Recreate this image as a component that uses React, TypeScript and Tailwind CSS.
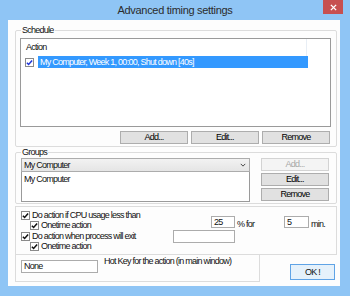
import React from "react";

const F = "font-['Liberation_Sans',Arial,sans-serif]";

function Check({ blue }: { blue?: boolean }) {
  return (
    <span className="flex h-[9px] w-[9px] shrink-0 items-center justify-center border border-[#8a8a8a] bg-white">
      <svg viewBox="0 0 8 8" className="h-[7px] w-[7px]">
        <path d="M1 4.2 L3 6.3 L7 1.6" fill="none" stroke={blue ? "#2036d8" : "#111"} strokeWidth="1.7" />
      </svg>
    </span>
  );
}

function Btn({ children, disabled }: { children: React.ReactNode; disabled?: boolean }) {
  return (
    <button
      className={`flex h-[13px] w-[68px] items-center justify-center border text-[9px] leading-none ${
        disabled ? "border-[#d3d3d3] bg-[#f4f4f4] text-[#a8a8a8]" : "border-[#adadad] bg-[#e1e1e1] text-black"
      }`}
    >
      {children}
    </button>
  );
}

function CheckRow({ label, indent }: { label: string; indent?: boolean }) {
  return (
    <div className={`flex h-[10px] items-center ${indent ? "pl-[9px]" : ""}`}>
      <Check />
      <span className="ml-[2px] whitespace-nowrap text-[9px] leading-none">{label}</span>
    </div>
  );
}

export default function App() {
  return (
    <div className={`flex h-[296px] w-[350px] flex-col bg-[#8fc5f5] tracking-[-0.75px] text-[#111] ${F}`}>
      {/* title bar */}
      <div className="flex h-[20px] items-start pl-[27px]">
        <div className="flex-1 pt-[5px] text-center text-[11px] leading-none tracking-[-0.3px] text-[#2b2b2b]">
          Advanced timing settings
        </div>
        <div className="mr-[7px] flex h-[14px] w-[20px] items-center justify-center bg-[#c75050]">
          <svg viewBox="0 0 8 8" className="h-[7px] w-[7px]">
            <path d="M1 1 L7 7 M7 1 L1 7" stroke="#fff" strokeWidth="1.6" />
          </svg>
        </div>
      </div>

      {/* client */}
      <div className="ml-[8px] h-[266px] w-[332px] bg-[#fdfdfd]">
        {/* Schedule */}
        <fieldset className="ml-[7px] mt-[5px] w-[322px] rounded-[2px] border border-[#dcdcdc] pb-[2px] pl-[4px] pr-[5px]">
          <legend className="ml-[1px] px-[1px] text-[9px] leading-[11px]">Schedule</legend>
          <div className="mt-[2px] h-[89px] border border-[#9a9a9a] bg-white">
            <div className="flex h-[17px]">
              <div className="flex w-[286px] items-center border-r border-[#e8eef5] pl-[5px] text-[9px] leading-none">
                Action
              </div>
            </div>
            <div className="flex h-[12px] items-center">
              <div className="ml-[4px]">
                <Check blue />
              </div>
              <div className="ml-[4px] flex h-[12px] w-[270px] items-center whitespace-nowrap bg-[#3399ff] pl-[2px] text-[9px] leading-none text-white">
                My Computer, Week 1, 00:00, Shut down [40s]
              </div>
            </div>
          </div>
          <div className="mr-[1px] mt-[4px] flex justify-end gap-[3px]">
            <Btn>Add...</Btn>
            <Btn>Edit...</Btn>
            <Btn>Remove</Btn>
          </div>
        </fieldset>

        {/* Groups */}
        <fieldset className="ml-[7px] w-[322px] rounded-[2px] border border-[#dcdcdc] pb-[1px] pl-[5px]">
          <legend className="px-[1px] text-[9px] leading-[11px]">Groups</legend>
          <div className="flex">
            <div className="w-[229px]">
              <div className="flex h-[14px] items-center justify-between border border-[#acacac] bg-gradient-to-b from-[#f2f2f2] to-[#e5e5e5] pl-[2px] pr-[3px] text-[9px] leading-none">
                <span>My Computer</span>
                <svg viewBox="0 0 8 5" className="h-[4px] w-[6px]">
                  <path d="M1 1 L4 4 L7 1" fill="none" stroke="#444" strokeWidth="1.3" />
                </svg>
              </div>
              <div className="h-[30px] border border-t-0 border-[#9a9a9a] bg-white pl-[2px] pt-[2px] text-[9px] leading-[11px]">
                My Computer
              </div>
            </div>
            <div className="ml-[11px] flex flex-col gap-[2px]">
              <Btn disabled>Add...</Btn>
              <Btn>Edit...</Btn>
              <Btn>Remove</Btn>
            </div>
          </div>
        </fieldset>

        {/* options */}
        <div className="ml-[7px] mt-[2px] w-[322px] border border-[#dcdcdc] pb-[3px] pl-[5px] pt-[3px]">
          <div className="flex items-start">
            <div className="w-[190px]">
              <CheckRow label="Do action if CPU usage less than" />
              <CheckRow label="Onetime action" indent />
            </div>
            <div className="mt-[6px] flex h-[12px] w-[24px] items-center border border-[#acacac] bg-white pl-[2px] text-[9px] leading-none">
              25
            </div>
            <span className="ml-[2px] mt-[10px] w-[47px] text-[9px] leading-none">% for</span>
            <div className="mt-[6px] flex h-[12px] w-[25px] items-center border border-[#acacac] bg-white pl-[2px] text-[9px] leading-none">
              5
            </div>
            <span className="ml-[2px] mt-[10px] text-[9px] leading-none">min.</span>
          </div>
          <div className="flex items-start">
            <div className="w-[152px] pt-[1px]">
              <CheckRow label="Do action when process will exit" />
              <CheckRow label="Onetime action" indent />
            </div>
            <div className="h-[13px] w-[62px] border border-[#acacac] bg-white" />
          </div>
        </div>

        {/* hot key */}
        <div className="flex items-start">
          <div className="ml-[7px] flex h-[27px] w-[245px] items-start border border-t-0 border-[#dcdcdc] pl-[5px] pt-[1px]">
            <div className="mt-[4px] flex h-[13px] w-[77px] items-center border border-[#acacac] bg-white pl-[2px] text-[9px] leading-none">
              None
            </div>
            <span className="ml-[6px] whitespace-nowrap text-[9px] leading-[10px]">
              Hot Key for the action (in main window)
            </span>
          </div>
          <button className="ml-[30px] mt-[9px] flex h-[16px] w-[45px] items-center justify-center border border-[#5fa3e6] bg-[#e5f1fb] text-[9px] leading-none">
            OK !
          </button>
        </div>
      </div>
    </div>
  );
}
